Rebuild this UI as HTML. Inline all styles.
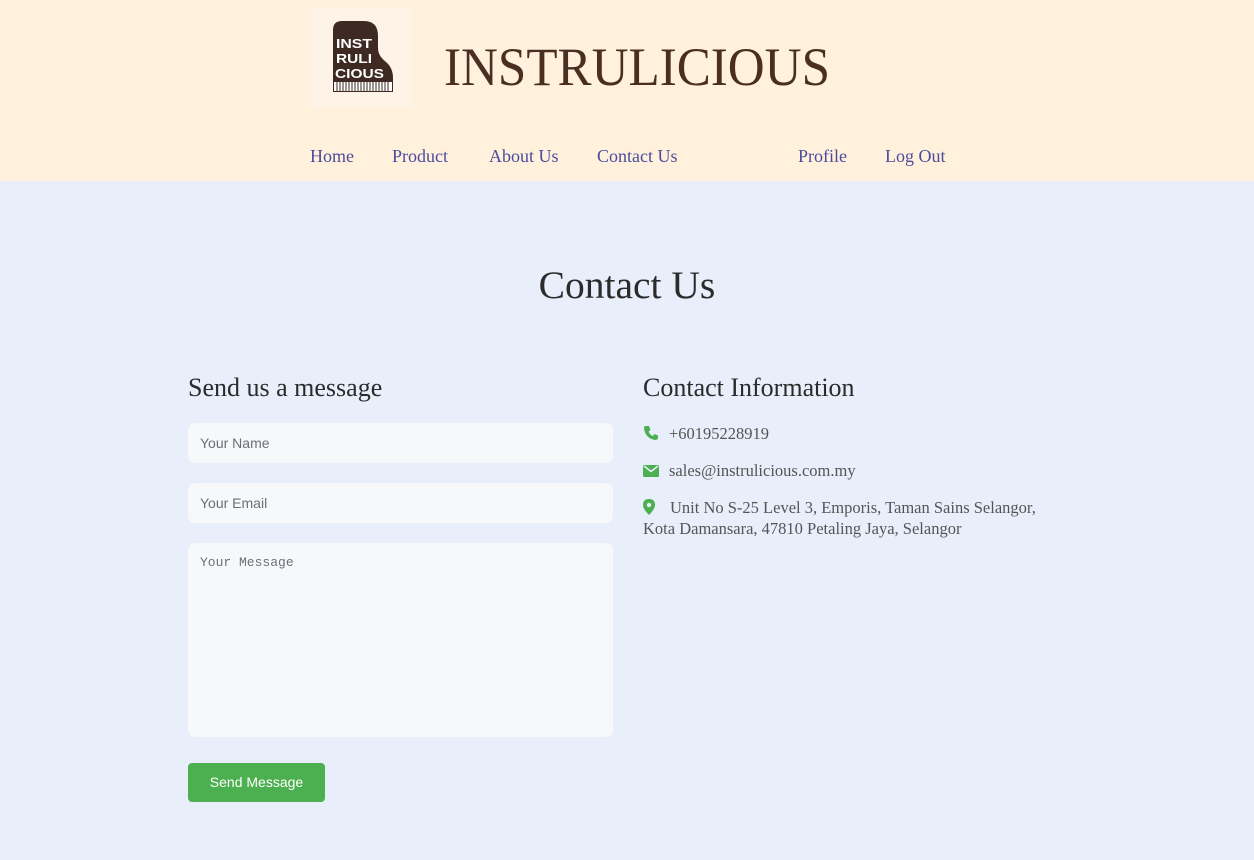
<!DOCTYPE html>
<html><head><meta charset="utf-8"><style>
*{box-sizing:border-box;margin:0;padding:0}
body{width:1254px;height:860px;background:#e8effb;font-family:"Liberation Serif",serif;overflow:hidden;position:relative}
.hdr{position:absolute;left:0;top:0;width:1254px;height:181px;background:#fff1dc}
.logo{position:absolute;left:312px;top:8px;width:101px;height:99px;background:#fdf3e6}
.nav a{position:absolute;top:146px;font-size:18px;color:#4b4c9e;text-decoration:none}
h1{position:absolute;left:0;width:1254px;top:262px;text-align:center;font-weight:normal;font-size:39.5px;color:#2b2b2b}
h2{position:absolute;font-weight:normal;font-size:26px;color:#2b2b2b;top:373px}
.in{position:absolute;left:188px;width:425px;background:#f6f8fa;border-radius:7px;font-family:"Liberation Sans",sans-serif;font-size:14px;color:#6b6f78;padding:12px}
.btn{position:absolute;left:188px;top:763px;width:137px;height:39px;background:#4caf50;border-radius:4px;color:#fff;font-family:"Liberation Sans",sans-serif;font-size:14px;text-align:center;line-height:39px}
.ci{position:absolute;left:643px;font-size:16.5px;color:#555;line-height:21px}
.ci svg{position:absolute;left:0}
</style></head><body>
<div class="hdr">
<div class="logo"><svg width="101" height="99" viewBox="0 0 101 99">
<path d="M21 22 Q21 13 30 13 L52 13 Q66 13 66 28 L66 40 Q66 48 74 54 Q81 60 81 70 L81 84 L21 84 Z" fill="#3e2a22"/>
<rect x="22" y="74" width="58" height="9" fill="#fff"/>
<g stroke="#3e2a22" stroke-width="1">
<path d="M25 74v9M28 74v9M31 74v9M34 74v9M37 74v9M40 74v9M43 74v9M46 74v9M49 74v9M52 74v9M55 74v9M58 74v9M61 74v9M64 74v9M67 74v9M70 74v9M73 74v9M76 74v9"/></g>
<g font-family="Liberation Sans,sans-serif" font-weight="bold" font-size="13" fill="#fff">
<text x="24" y="40" textLength="36" lengthAdjust="spacingAndGlyphs">INST</text><text x="24" y="55" textLength="36" lengthAdjust="spacingAndGlyphs">RULI</text><text x="23" y="70" textLength="49" lengthAdjust="spacingAndGlyphs">CIOUS</text></g>
</svg></div>
<svg style="position:absolute;left:440px;top:30px" width="400" height="70"><text x="4" y="55" textLength="386" lengthAdjust="spacingAndGlyphs" font-family="Liberation Serif,serif" font-size="54" fill="#4a2e22">INSTRULICIOUS</text></svg>
<div class="nav"><a style="left:310px">Home</a><a style="left:392px">Product</a><a style="left:489px">About Us</a><a style="left:597px">Contact Us</a><a style="left:798px">Profile</a><a style="left:885px">Log Out</a></div>
</div>
<h1>Contact Us</h1>
<h2 style="left:188px">Send us a message</h2>
<h2 style="left:643px">Contact Information</h2>
<div class="in" style="top:423px;height:40px">Your Name</div>
<div class="in" style="top:483px;height:40px">Your Email</div>
<div class="in" style="top:543px;height:194px;font-family:'Liberation Mono',monospace;font-size:13px">Your Message</div>
<div class="btn">Send Message</div>
<div class="ci" style="top:423px;width:440px"><svg width="16" height="16" viewBox="0 0 16 16" style="top:2px"><path d="M3 1 L6 1 L7.5 5 L5.5 6.5 Q7 10 10 11 L11.5 9 L15 10.5 L15 13.5 Q14 15 12 15 Q2 13 1 3 Q1 1 3 1Z" fill="#4caf50"/></svg><span style="margin-left:26px">+60195228919</span></div>
<div class="ci" style="top:460px;width:440px"><svg width="16" height="14" viewBox="0 0 16 14" style="top:4px"><rect x="0" y="1" width="16" height="12" rx="1" fill="#4caf50"/><path d="M1 2 L8 7.5 L15 2" stroke="#e8effb" stroke-width="1.6" fill="none"/></svg><span style="margin-left:26px">sales@instrulicious.com.my</span></div>
<div class="ci" style="top:497px;width:450px"><svg width="12" height="16" viewBox="0 0 12 16" style="top:2px"><path d="M6 0 Q12 0 12 6 Q12 10 6 16 Q0 10 0 6 Q0 0 6 0Z" fill="#4caf50"/><circle cx="6" cy="6" r="2.2" fill="#e8effb"/></svg><span style="margin-left:27px">Unit No S-25 Level 3, Emporis, Taman Sains Selangor,</span><br>Kota Damansara, 47810 Petaling Jaya, Selangor</div>
</body></html>
